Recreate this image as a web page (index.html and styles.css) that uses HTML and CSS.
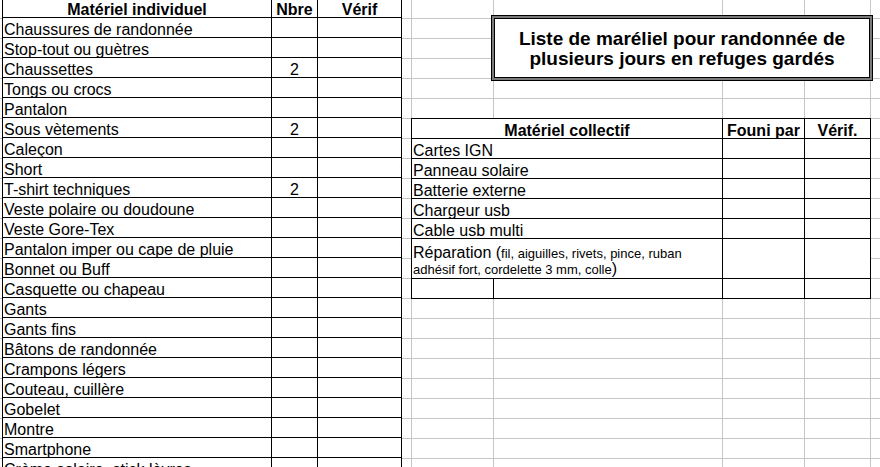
FILE: index.html
```html
<!DOCTYPE html>
<html lang="fr">
<head>
<meta charset="utf-8">
<title>Liste de matériel</title>
<link rel="stylesheet" href="styles.css">
</head>
<body>
<div class="sheet">
  <div class="ind">
    <div class="c h">Matériel individuel</div><div class="c h">Nbre</div><div class="c h">Vérif</div>
    <div class="c">Chaussures de randonnée</div><div class="c n"></div><div class="c"></div>
    <div class="c">Stop-tout ou guètres</div><div class="c n"></div><div class="c"></div>
    <div class="c">Chaussettes</div><div class="c n">2</div><div class="c"></div>
    <div class="c">Tongs ou crocs</div><div class="c n"></div><div class="c"></div>
    <div class="c">Pantalon</div><div class="c n"></div><div class="c"></div>
    <div class="c">Sous vètements</div><div class="c n">2</div><div class="c"></div>
    <div class="c">Caleçon</div><div class="c n"></div><div class="c"></div>
    <div class="c">Short</div><div class="c n"></div><div class="c"></div>
    <div class="c">T-shirt techniques</div><div class="c n">2</div><div class="c"></div>
    <div class="c">Veste polaire ou doudoune</div><div class="c n"></div><div class="c"></div>
    <div class="c">Veste Gore-Tex</div><div class="c n"></div><div class="c"></div>
    <div class="c">Pantalon imper ou cape de pluie</div><div class="c n"></div><div class="c"></div>
    <div class="c">Bonnet ou Buff</div><div class="c n"></div><div class="c"></div>
    <div class="c">Casquette ou chapeau</div><div class="c n"></div><div class="c"></div>
    <div class="c">Gants</div><div class="c n"></div><div class="c"></div>
    <div class="c">Gants fins</div><div class="c n"></div><div class="c"></div>
    <div class="c">Bâtons de randonnée</div><div class="c n"></div><div class="c"></div>
    <div class="c">Crampons légers</div><div class="c n"></div><div class="c"></div>
    <div class="c">Couteau, cuillère</div><div class="c n"></div><div class="c"></div>
    <div class="c">Gobelet</div><div class="c n"></div><div class="c"></div>
    <div class="c">Montre</div><div class="c n"></div><div class="c"></div>
    <div class="c">Smartphone</div><div class="c n"></div><div class="c"></div>
    <div class="c">Crème solaire, stick lèvres</div><div class="c n"></div><div class="c"></div>
  </div>
  <div class="right">
    <div class="title">Liste de maréliel pour randonnée de<br>plusieurs jours en refuges gardés</div>
    <div class="col">
      <div class="c h span2">Matériel collectif</div><div class="c h">Founi par</div><div class="c h">Vérif.</div>
      <div class="c span2">Cartes IGN</div><div class="c"></div><div class="c"></div>
      <div class="c span2">Panneau solaire</div><div class="c"></div><div class="c"></div>
      <div class="c span2">Batterie externe</div><div class="c"></div><div class="c"></div>
      <div class="c span2">Chargeur usb</div><div class="c"></div><div class="c"></div>
      <div class="c span2">Cable usb multi</div><div class="c"></div><div class="c"></div>
      <div class="c span2 tall rep">Réparation (<span class="small">fil, aiguilles, rivets, pince, ruban adhésif fort, cordelette 3 mm, colle</span>)</div><div class="c tall"></div><div class="c tall"></div>
      <div class="c"></div><div class="c"></div><div class="c"></div><div class="c"></div>
    </div>
  </div>
</div>
</body>
</html>
```

FILE: styles.css
```css
html, body {
  margin: 0;
  padding: 0;
}
body {
  width: 880px;
  height: 467px;
  overflow: hidden;
  background-color: #fff;
  background-image:
    linear-gradient(to right,
      transparent 411px, #c6c6c6 411px 412px,
      transparent 412px 493px, #c6c6c6 493px 494px,
      transparent 494px 722px, #c6c6c6 722px 723px,
      transparent 723px 804px, #c6c6c6 804px 805px,
      transparent 805px 870px, #c6c6c6 870px 871px,
      transparent 871px),
    repeating-linear-gradient(to bottom,
      transparent 0 18px, #c6c6c6 18px 19px, transparent 19px 20px);
  font-family: "Liberation Sans", Arial, sans-serif;
  font-size: 16px;
  color: #000;
}
.sheet {
  display: flex;
  align-items: flex-start;
  margin-top: -3px;
}
.ind {
  margin-left: 2px;
  width: 400px;
  box-sizing: border-box;
  display: grid;
  grid-template-columns: 268px 45px 83px;
  grid-auto-rows: 19px;
  gap: 1px;
  padding: 1px;
  background: #000;
}
.c {
  background: #fff;
  line-height: 19px;
  padding: 2px 0 0 1px;
  box-sizing: border-box;
  white-space: nowrap;
}
.h {
  font-weight: bold;
  text-align: center;
  padding-left: 0;
}
.n {
  text-align: center;
  padding-left: 0;
}
.right {
  display: flex;
  flex-direction: column;
  align-items: flex-start;
}
.title {
  margin: 19px 0 0 90px;
  width: 380px;
  height: 64px;
  box-sizing: border-box;
  border: 2px solid #7a7a7a;
  box-shadow: inset 0 0 0 1px #000, 0 0 0 1px #000;
  background: #fff;
  font-weight: bold;
  font-size: 19px;
  line-height: 20px;
  text-align: center;
  padding-top: 11px;
}
.col {
  margin: 38px 0 0 9px;
  width: 460px;
  box-sizing: border-box;
  display: grid;
  grid-template-columns: 81px 228px 81px 65px;
  grid-auto-rows: 19px;
  gap: 1px;
  padding: 1px;
  background: #000;
}
.span2 {
  grid-column: span 2;
}
.tall {
  grid-row: span 2;
}
.rep {
  white-space: normal;
  line-height: 15px;
  padding: 6px 4px 0 1px;
}
.small {
  font-size: 13px;
}
```
